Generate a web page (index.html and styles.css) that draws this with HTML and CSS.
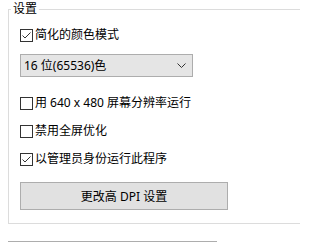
FILE: index.html
```html
<!DOCTYPE html>
<html lang="zh-CN">
<head>
<meta charset="utf-8">
<link rel="stylesheet" href="styles.css">
</head>
<body>
<fieldset class="group">
  <legend class="legend">设置</legend>
  <div class="row first">
    <span class="box"><svg viewBox="0 0 11 11" width="11" height="11"><path d="M1.5 5.5 L4 8 L9.5 2.5" fill="none" stroke="#333" stroke-width="1"/></svg></span>
    <span class="label">简化的颜色模式</span>
  </div>
  <div class="combo">
    <span class="combo-text">16 位(65536)色</span>
    <svg class="chev" viewBox="0 0 9 5" width="9" height="5"><path d="M0.5 0.5 L4.5 4.5 L8.5 0.5" fill="none" stroke="#333" stroke-width="1"/></svg>
  </div>
  <div class="row gap-big">
    <span class="box"></span>
    <span class="label">用 640 x 480 屏幕分辨率运行</span>
  </div>
  <div class="row">
    <span class="box"></span>
    <span class="label">禁用全屏优化</span>
  </div>
  <div class="row">
    <span class="box"><svg viewBox="0 0 11 11" width="11" height="11"><path d="M1.5 5.5 L4 8 L9.5 2.5" fill="none" stroke="#333" stroke-width="1"/></svg></span>
    <span class="label">以管理员身份运行此程序</span>
  </div>
  <div class="btn">更改高 DPI 设置</div>
</fieldset>
<div class="next-btn"></div>
</body>
</html>
```

FILE: styles.css
```css
html, body {
  margin: 0;
  padding: 0;
  background: #fff;
  overflow: hidden;
  width: 300px;
  height: 243px;
}
body {
  font-family: "Noto Sans", "Noto Sans CJK SC", sans-serif;
  font-size: 12px;
  color: #000;
}
.group {
  margin: 1px 0 0 8px;
  width: 293px;
  min-width: 0;
  border: 1px solid #dcdcdc;
  border-right: none;
  padding: 0 11px 13px 11px;
  box-sizing: border-box;
}
.legend {
  margin-left: -9px;
  padding: 0 2px;
  line-height: 16px;
  height: 16px;
}
.row {
  display: flex;
  align-items: center;
  height: 20px;
  margin-top: 8px;
}
.row.first {
  margin-top: 8px;
}
.row.gap-big {
  margin-top: 16px;
}
.box {
  width: 13px;
  height: 13px;
  box-sizing: border-box;
  border: 1px solid #333;
  background: #fff;
  display: flex;
  align-items: center;
  justify-content: center;
  flex: none;
}
.box svg {
  display: block;
}
.label {
  margin-left: 2px;
  line-height: 20px;
  white-space: nowrap;
}
.combo {
  margin-top: 9px;
  width: 173px;
  height: 23px;
  box-sizing: border-box;
  border: 1px solid #adadad;
  background: #e5e5e5;
  display: flex;
  align-items: center;
  justify-content: space-between;
  padding: 0 6px 0 3px;
}
.combo-text {
  line-height: 20px;
}
.chev {
  display: block;
}
.btn {
  margin-top: 13px;
  width: 208px;
  height: 28px;
  box-sizing: border-box;
  border: 1px solid #adadad;
  background: #e1e1e1;
  display: flex;
  align-items: center;
  justify-content: center;
}
.next-btn {
  margin: 17px 0 0 8px;
  width: 209px;
  height: 1px;
  background: #adadad;
}
```
